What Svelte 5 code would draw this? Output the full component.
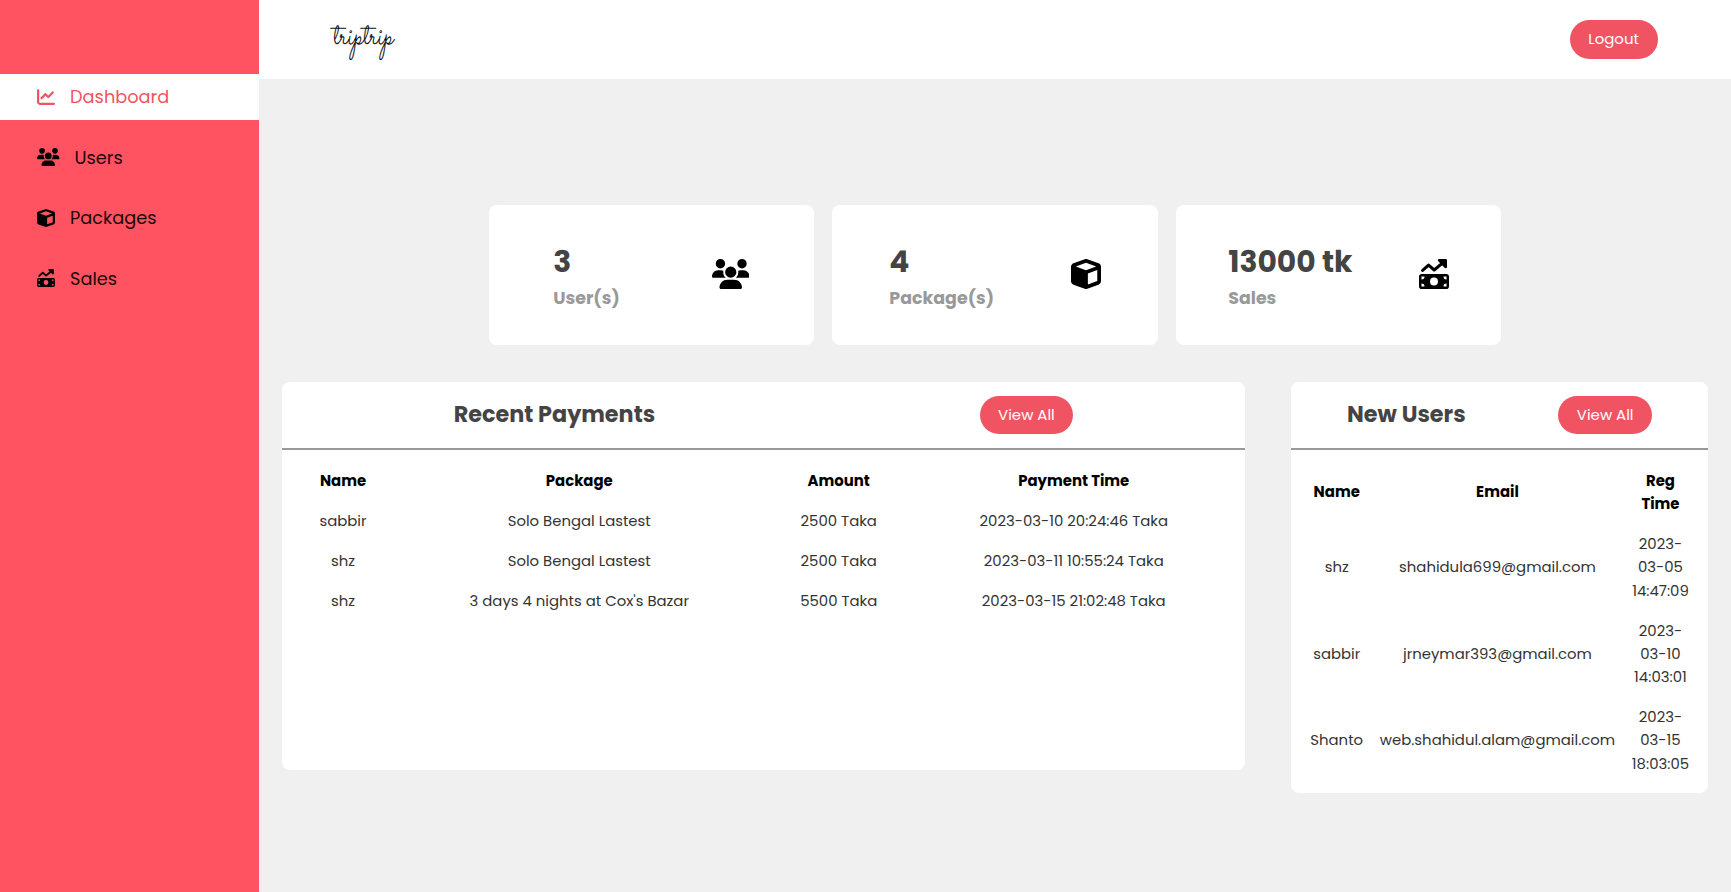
<script>
  const menu = [
    { label: 'Dashboard', icon: 'chart', active: true },
    { label: 'Users', icon: 'users' },
    { label: 'Packages', icon: 'cube' },
    { label: 'Sales', icon: 'sales' }
  ];

  const stats = [
    { value: '3', label: 'User(s)', icon: 'users' },
    { value: '4', label: 'Package(s)', icon: 'cube' },
    { value: '13000 tk', label: 'Sales', icon: 'sales' }
  ];

  const payments = [
    ['sabbir', 'Solo Bengal Lastest', '2500 Taka', '2023-03-10 20:24:46 Taka'],
    ['shz', 'Solo Bengal Lastest', '2500 Taka', '2023-03-11 10:55:24 Taka'],
    ['shz', "3 days 4 nights at Cox's Bazar", '5500 Taka', '2023-03-15 21:02:48 Taka']
  ];

  const users = [
    ['shz', 'shahidula699@gmail.com', '2023-03-05 14:47:09'],
    ['sabbir', 'jrneymar393@gmail.com', '2023-03-10 14:03:01'],
    ['Shanto', 'web.shahidul.alam@gmail.com', '2023-03-15 18:03:05']
  ];
</script>

{#snippet icon(name)}
  {#if name === 'chart'}
    <svg class="icon" viewBox="0 0 512 512"><path d="M64 64c0-17.700-14.300-32-32-32S0 46.300 0 64V400c0 44.200 35.800 80 80 80H480c17.700 0 32-14.300 32-32s-14.300-32-32-32H80c-8.800 0-16-7.200-16-16V64zm406.600 86.600c12.500-12.500 12.500-32.800 0-45.300s-32.800-12.500-45.300 0L320 210.700l-57.400-57.400c-12.500-12.500-32.800-12.500-45.300 0l-112 112c-12.500 12.500-12.500 32.800 0 45.300s32.800 12.500 45.300 0L240 221.300l57.400 57.400c12.500 12.500 32.800 12.500 45.300 0l128-128z" /></svg>
  {:else if name === 'users'}
    <svg class="icon wide" viewBox="0 0 640 512"><path d="M144 0a80 80 0 1 1 0 160A80 80 0 1 1 144 0zM512 0a80 80 0 1 1 0 160A80 80 0 1 1 512 0zM0 298.700C0 239.800 47.800 192 106.700 192h42.700c15.900 0 31 3.500 44.600 9.700c-1.300 7.200-1.900 14.700-1.900 22.300c0 38.200 16.800 72.500 43.300 96H21.300C9.600 320 0 310.400 0 298.700zM405.300 320c26.600-23.500 43.300-57.800 43.300-96c0-7.600-.7-15-1.900-22.300c13.600-6.300 28.700-9.700 44.600-9.700h42.700C592.200 192 640 239.800 640 298.700c0 11.800-9.600 21.300-21.300 21.300H405.300zM224 224a96 96 0 1 1 192 0 96 96 0 1 1-192 0zM128 485.300C128 411.700 187.700 352 261.300 352H378.700C452.300 352 512 411.700 512 485.300c0 14.700-11.900 26.700-26.700 26.700H154.700c-14.700 0-26.700-11.900-26.700-26.700z" /></svg>
  {:else if name === 'cube'}
    <svg class="icon" viewBox="0 0 512 512"><path d="M234.500 5.700c13.900-5 29.100-5 43.100 0l192 68.600C495 83.400 512 107.500 512 134.600V377.400c0 27-17 51.200-42.500 60.300l-192 68.600c-13.900 5-29.100 5-43.100 0l-192-68.600C17 428.600 0 404.500 0 377.400V134.600c0-27 17-51.200 42.500-60.300l192-68.600zM256 66L82.300 128 256 190l173.700-62L256 66zm32 368.600l160-57.100v-188L288 246.600v188z" /></svg>
  {:else}
    <svg class="icon" viewBox="0 0 512 512">
      <path d="M62 196 163 105 260 188 414 58" fill="none" stroke="currentColor" stroke-width="52" stroke-linecap="round" stroke-linejoin="round" />
      <path d="M346 0H456q22 0 22 22V136q0 22-22 22-12 0-20-8L330 40q-8-8-8-18 0-22 24-22Z" />
      <path fill-rule="evenodd" d="M48 256H464a48 48 0 0 1 48 48V464a48 48 0 0 1-48 48H48a48 48 0 0 1-48-48V304a48 48 0 0 1 48-48ZM256 316a68 68 0 1 0 0 136 68 68 0 1 0 0-136ZM42 298V350a52 52 0 0 0 52-52ZM470 298H418a52 52 0 0 0 52 52ZM42 470H94a52 52 0 0 0-52-52ZM470 470V418a52 52 0 0 0-52 52Z" />
    </svg>
  {/if}
{/snippet}

<div class="page">
  <aside class="sidebar">
    <nav>
      {#each menu as item}
        <a class="item" class:active={item.active}>
          {@render icon(item.icon)}
          <span>{item.label}</span>
        </a>
      {/each}
    </nav>
  </aside>

  <div class="main">
    <header class="topbar">
      <svg class="logo" viewBox="0 0 66 44">
        <text transform="translate(3 26) skewX(-7) scale(1 1.15)" x="0" y="0" textLength="60" lengthAdjust="spacingAndGlyphs">triptrip</text>
      </svg>
      <button class="btn">Logout</button>
    </header>

    <main>
      <section class="cards">
        {#each stats as stat}
          <article class="card">
            <div>
              <div class="value">{stat.value}</div>
              <div class="label">{stat.label}</div>
            </div>
            {@render icon(stat.icon)}
          </article>
        {/each}
      </section>

      <section class="panels">
        <div class="panel payments">
          <div class="head">
            <h2>Recent Payments</h2>
            <button class="btn">View All</button>
          </div>
          <table>
            <colgroup><col class="c1" /><col class="c2" /><col class="c3" /><col class="c4" /></colgroup>
            <thead>
              <tr><th>Name</th><th>Package</th><th>Amount</th><th>Payment Time</th></tr>
            </thead>
            <tbody>
              {#each payments as row}
                <tr>{#each row as cell}<td>{cell}</td>{/each}</tr>
              {/each}
            </tbody>
          </table>
        </div>

        <div class="panel newusers">
          <div class="head">
            <h2>New Users</h2>
            <button class="btn">View All</button>
          </div>
          <table>
            <colgroup><col class="u1" /><col class="u2" /><col class="u3" /></colgroup>
            <thead>
              <tr><th>Name</th><th>Email</th><th>Reg Time</th></tr>
            </thead>
            <tbody>
              {#each users as row}
                <tr>{#each row as cell}<td>{cell}</td>{/each}</tr>
              {/each}
            </tbody>
          </table>
        </div>
      </section>
    </main>
  </div>
</div>

<style>
  :global(body) {
    margin: 0;
    overflow: hidden;
  }

  .page {
    box-sizing: border-box;
    display: flex;
    width: 100%;
    height: 100vh;
    background: #f0f0f0;
    color: #000;
    font-family: Poppins, Inter, 'Open Sans', sans-serif;
  }

  .icon {
    display: block;
    flex: none;
    width: 18px;
    height: 18px;
    fill: currentColor;
  }

  .icon.wide {
    width: 22.5px;
  }

  .sidebar {
    flex: none;
    box-sizing: border-box;
    width: 259px;
    padding-top: 74.4px;
    background: #ff5361;
  }

  nav {
    display: flex;
    flex-direction: column;
    gap: 14.88px;
  }

  .item {
    display: flex;
    align-items: center;
    gap: 14.88px;
    box-sizing: border-box;
    height: 45.57px;
    padding: 0 0 0.6px 37.2px;
    color: #1a0808;
    font-size: 17.75px;
  }

  .item .icon {
    color: #000;
  }

  .item.active,
  .item.active .icon {
    color: #f05462;
  }

  .item.active {
    background: #fff;
  }

  .main {
    flex: 1;
    min-width: 0;
  }

  .topbar {
    display: flex;
    align-items: center;
    justify-content: space-between;
    box-sizing: border-box;
    height: 79px;
    padding: 0 73.5px 0 71px;
    background: #fff;
  }

  .logo {
    width: 66px;
    height: 44px;
    overflow: visible;
  }

  .logo text {
    font: 28px Sacramento, 'Liberation Serif', cursive;
    fill: #111;
  }

  .btn {
    height: 38.4px;
    padding: 0 18.600px;
    border: 0;
    border-radius: 20px;
    background: #f05462;
    color: #fff;
    font: inherit;
    font-size: 14.95px;
    white-space: nowrap;
  }

  .cards {
    display: flex;
    justify-content: center;
    gap: 18.6px;
    padding: 126.300px 0 0;
  }

  .card {
    display: flex;
    align-items: center;
    justify-content: space-around;
    box-sizing: border-box;
    width: 325.2px;
    height: 139.5px;
    padding: 0 18.6px;
    border-radius: 8px;
    background: #fff;
  }

  .card .icon {
    width: 30px;
    height: 30px;
    margin-bottom: 2px;
  }

  .card .icon.wide {
    width: 37.5px;
  }

  .value {
    color: #444;
    font-size: 29.76px;
    font-weight: 700;
    line-height: 46px;
  }

  .label {
    color: #999;
    font-size: 17.41px;
    font-weight: 700;
    line-height: 27px;
  }

  .panels {
    display: flex;
    align-items: flex-start;
    justify-content: space-between;
    padding: 37.2px 23.25px 0;
  }

  .panel {
    box-sizing: border-box;
    padding-bottom: 9.8px;
    border-radius: 8px;
    background: #fff;
  }

  .payments {
    width: 962.6px;
    height: 387.800px;
  }

  .newusers {
    width: 416.3px;
  }

  .head {
    display: flex;
    align-items: center;
    justify-content: space-around;
    height: 66px;
    padding: 0 9.3px;
    border-bottom: 2px solid #999;
  }

  h2 {
    margin: 0;
    padding-top: 1px;
    color: #444;
    font-size: 22.32px;
    font-weight: 700;
    line-height: 34px;
  }

  table {
    margin: 10.4px 0 0 10px;
    border-collapse: collapse;
    table-layout: fixed;
    width: 942.5px;
    font-size: 14.88px;
    line-height: 23.25px;
    text-align: center;
  }

  .newusers table {
    width: 396.5px;
  }

  th,
  td {
    padding: 8.4px 0;
    vertical-align: middle;
  }

  td {
    color: #333;
  }

  .newusers th:last-child,
  .newusers td:last-child {
    padding-right: 8px;
    padding-left: 8px;
  }

  .c1 { width: 101.5px; }
  .c2 { width: 371px; }
  .c3 { width: 148px; }
  .c4 { width: 322px; }
  .u1 { width: 70.5px; }
  .u2 { width: 251px; }
  .u3 { width: 75px; }
</style>
